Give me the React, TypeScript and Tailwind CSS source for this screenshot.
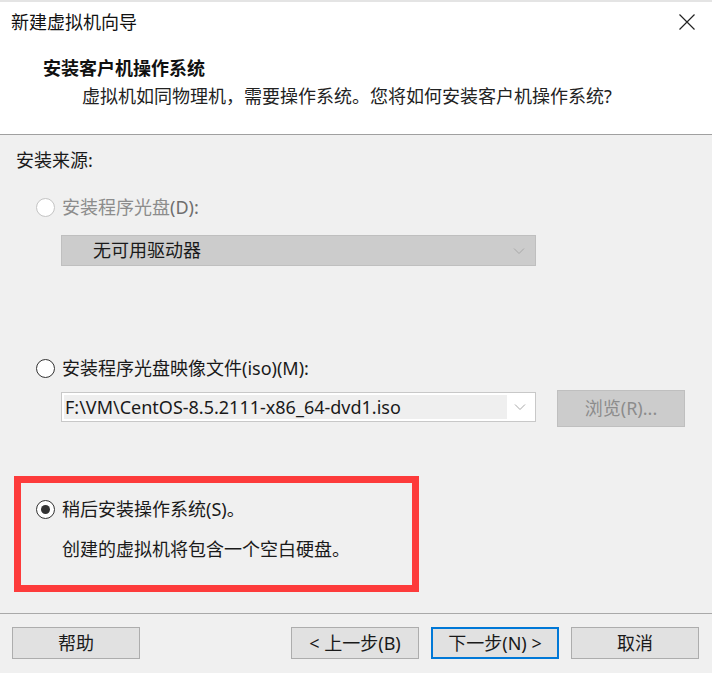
import React from "react";

const FONT = { fontFamily: "'Noto Sans', 'Noto Sans CJK SC', sans-serif" };

function Radio({ state }: { state: "disabled" | "off" | "on" }) {
  const border = state === "disabled" ? "border-[#c4c4c4]" : "border-[#333333]";
  return (
    <span
      className={`flex h-[19px] w-[19px] shrink-0 items-center justify-center rounded-full border bg-white ${border}`}
    >
      {state === "on" && <span className="h-[9px] w-[9px] rounded-full bg-[#333333]" />}
    </span>
  );
}

function Chevron() {
  return (
    <svg width="12" height="8" viewBox="0 0 12 8" className="shrink-0">
      <path d="M1 1.5 L6 6.5 L11 1.5" fill="none" stroke="#a8a8a8" strokeWidth="1" />
    </svg>
  );
}

function Btn({ children, primary }: { children: React.ReactNode; primary?: boolean }) {
  return (
    <div
      className={`flex h-[32px] w-[128px] items-center justify-center bg-[#e1e1e1] text-[18px] text-[#1a1a1a] ${
        primary ? "border-2 border-[#0078d7]" : "border border-[#adadad]"
      }`}
    >
      {children}
    </div>
  );
}

export default function App() {
  return (
    <div className="h-[673px] w-[712px] overflow-hidden bg-[#f0f0f0]" style={FONT}>
      <div className="h-[2px] bg-[#e4e4e4]" />
      {/* header */}
      <div className="flex h-[133px] flex-col border-b border-[#a0a0a0] bg-white">
        <div className="flex h-[40px] items-center justify-between pl-[11px] pr-[17px]">
          <span className="text-[18px] leading-[24px] text-[#111]">新建虚拟机向导</span>
          <svg width="16" height="16" viewBox="0 0 16 16">
            <path d="M0.5 0.5 L15.5 15.5 M15.5 0.5 L0.5 15.5" stroke="#222" strokeWidth="1.2" />
          </svg>
        </div>
        <div className="ml-[43px] mt-[14px] text-[18px] font-bold leading-[24px] text-[#111]">
          安装客户机操作系统
        </div>
        <div className="ml-[82px] mt-[4px] text-[18px] leading-[24px] text-[#222]">
          虚拟机如同物理机，需要操作系统。您将如何安装客户机操作系统?
        </div>
      </div>

      {/* content */}
      <div className="flex flex-col">
        <div className="ml-[16px] mt-[13px] text-[18px] leading-[24px] text-[#1a1a1a]">安装来源:</div>

        <div className="ml-[36px] mt-[23px] flex h-[24px] items-center gap-[7px]">
          <Radio state="disabled" />
          <span className="text-[18px] leading-[24px] text-[#8c8c8c]">
            安装程序光盘<span className="text-[#6e6e6e]">(D):</span>
          </span>
        </div>

        <div className="ml-[61px] mt-[16px] flex h-[31px] w-[475px] items-center justify-between border border-[#bfbfbf] bg-[#cccccc] pl-[31px] pr-[10px]">
          <span className="text-[18px] text-[#1a1a1a]">无可用驱动器</span>
          <Chevron />
        </div>

        <div className="ml-[36px] mt-[90px] flex h-[24px] items-center gap-[7px]">
          <Radio state="off" />
          <span className="text-[18px] leading-[24px] text-[#1a1a1a]">安装程序光盘映像文件(iso)(M):</span>
        </div>

        <div className="mt-[10px] flex items-start">
          <div className="ml-[61px] mt-[2px] flex h-[30px] w-[475px] items-center border border-[#c8c8c8] bg-white p-[2px]">
            <div className="flex h-full w-[443px] items-center bg-[#efefef] pl-[1px] text-[18px] text-[#1a1a1a]">
              F:\VM\CentOS-8.5.2111-x86_64-dvd1.iso
            </div>
            <div className="flex flex-1 items-center justify-center">
              <Chevron />
            </div>
          </div>
          <div className="ml-[21px] flex h-[37px] w-[128px] items-center justify-center border border-[#bfbfbf] bg-[#cccccc] text-[18px] text-[#8c8c8c]">
            浏览(R)...
          </div>
        </div>

        <div className="ml-[14px] mt-[49px] flex h-[116px] w-[405px] flex-col border-[7px] border-[#fd3b3b] pl-[15px]">
          <div className="mt-[14px] flex h-[24px] items-center gap-[7px]">
            <Radio state="on" />
            <span className="text-[18px] leading-[24px] text-[#1a1a1a]">稍后安装操作系统(S)。</span>
          </div>
          <div className="ml-[26px] mt-[16px] text-[18px] leading-[24px] text-[#1a1a1a]">
            创建的虚拟机将包含一个空白硬盘。
          </div>
        </div>

        <div className="mt-[21px] h-px bg-[#a9a9a9]" />

        <div className="mt-[13px] flex">
          <div className="ml-[12px]">
            <Btn>帮助</Btn>
          </div>
          <div className="ml-[151px] flex gap-[12px]">
            <Btn>&lt; 上一步(B)</Btn>
            <Btn primary>下一步(N) &gt;</Btn>
            <Btn>取消</Btn>
          </div>
        </div>
      </div>
    </div>
  );
}
